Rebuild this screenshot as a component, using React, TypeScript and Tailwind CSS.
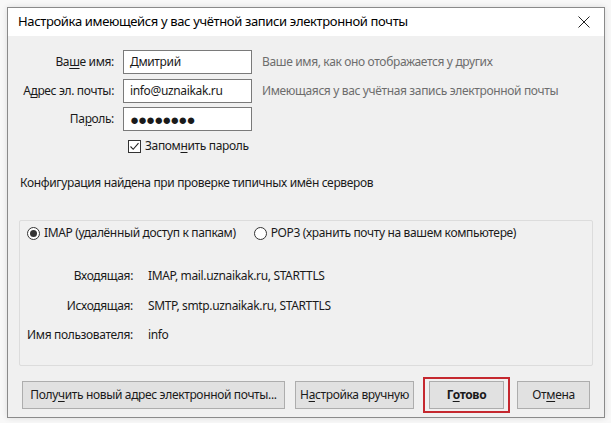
import React from "react";

const Key: React.FC<{ children: React.ReactNode }> = ({ children }) => (
  <span className="underline underline-offset-2 decoration-1">{children}</span>
);

const Field: React.FC<{ label: React.ReactNode; value: React.ReactNode; hint?: string }> = ({
  label,
  value,
  hint,
}) => (
  <div className="flex items-center h-[24px]">
    <div className="w-[107px] text-right pr-[1px]">{label}</div>
    <div className="ml-[8px] w-[129px] h-[24px] bg-white border border-[#7a7a7a] flex items-center px-[6px]">
      {value}
    </div>
    {hint && <div className="ml-[10px] text-[#6d6d6d]">{hint}</div>}
  </div>
);

const Radio: React.FC<{ checked?: boolean; label: string }> = ({ checked, label }) => (
  <div className="flex items-center gap-[4px]">
    <span className="w-[13px] h-[13px] rounded-full border border-[#333] bg-white flex items-center justify-center">
      {checked && <span className="w-[7px] h-[7px] rounded-full bg-[#333]" />}
    </span>
    <span>{label}</span>
  </div>
);

const InfoRow: React.FC<{ label: string; value: string }> = ({ label, value }) => (
  <div className="flex items-center">
    <div className="w-[106px] text-right">{label}</div>
    <div className="ml-[15px]">{value}</div>
  </div>
);

export default function App() {
  return (
    <div
      className="w-[611px] h-[423px] bg-[#f8f8f8] pt-[7px] pl-[7px] text-[12px] tracking-[-0.35px] text-[#1a1a1a]"
      style={{ fontFamily: '"Noto Sans", "Open Sans", sans-serif' }}
    >
      <div className="w-[598px] h-[411px] border border-[#8a8a8a] bg-[#f0f0f0] flex flex-col shadow-[0_0_6px_rgba(0,0,0,0.12)]">
        {/* title bar */}
        <div className="h-[28px] bg-white flex items-center justify-between pl-[10px] pr-[14px]">
          <span className="text-[13px] text-black">
            Настройка имеющейся у вас учётной записи электронной почты
          </span>
          <svg width="12" height="12" viewBox="0 0 12 12">
            <path d="M0.5 0.5 L11.5 11.5 M11.5 0.5 L0.5 11.5" stroke="#222" strokeWidth="1" />
          </svg>
        </div>

        {/* account fields */}
        <div className="flex flex-col gap-[4.5px] mt-[14px]">
          <Field
            label={<>Ва<Key>ш</Key>е имя:</>}
            value="Дмитрий"
            hint="Ваше имя, как оно отображается у других"
          />
          <Field
            label={<>А<Key>д</Key>рес эл. почты:</>}
            value="info@uznaikak.ru"
            hint="Имеющаяся у вас учётная запись электронной почты"
          />
          <Field
            label={<>Па<Key>р</Key>оль:</>}
            value={<span className="text-[15px] tracking-[-1px] leading-none">●●●●●●●●</span>}
          />
        </div>

        <div className="flex items-center ml-[120px] mt-[6px] gap-[4px]">
          <span className="w-[13px] h-[13px] border border-[#333] bg-white flex items-center justify-center">
            <svg width="11" height="11" viewBox="0 0 11 11">
              <path d="M1.5 5.5 L4.2 8.3 L9.5 2.2" stroke="#222" strokeWidth="1.1" fill="none" />
            </svg>
          </span>
          <span>
            Запом<Key>н</Key>ить пароль
          </span>
        </div>

        <div className="ml-[12px] mt-[19px]">Конфигурация найдена при проверке типичных имён серверов</div>

        {/* server group */}
        <div className="mx-[11px] mt-[28px] h-[146px] border border-[#dcdcdc] rounded-[2px] flex flex-col pl-[7px]">
          <div className="flex items-center gap-[18px] mt-[3px]">
            <Radio checked label="IMAP (удалённый доступ к папкам)" />
            <Radio label="POP3 (хранить почту на вашем компьютере)" />
          </div>
          <div className="flex flex-col gap-[11.5px] mt-[25px]">
            <InfoRow label="Входящая:" value="IMAP, mail.uznaikak.ru, STARTTLS" />
            <InfoRow label="Исходящая:" value="SMTP, smtp.uznaikak.ru, STARTTLS" />
            <InfoRow label="Имя пользователя:" value="info" />
          </div>
        </div>

        {/* buttons */}
        <div className="flex items-center mt-[11px] px-[14px]">
          <button className="h-[28px] w-[263px] bg-[#e1e1e1] border border-[#adadad]">
            Полу<Key>ч</Key>ить новый адрес электронной почты...
          </button>
          <div className="flex-1" />
          <button className="h-[28px] w-[119px] bg-[#e1e1e1] border border-[#adadad]">
            Н<Key>а</Key>стройка вручную
          </button>
          <div className="ml-[9px] py-[2px] px-[4px] border-2 border-[#c5282f]">
            <button className="h-[28px] w-[75px] bg-[#e1e1e1] border border-[#adadad] font-bold">
              Г<Key>о</Key>тово
            </button>
          </div>
          <button className="ml-[7px] h-[28px] w-[73px] bg-[#e1e1e1] border border-[#adadad]">
            От<Key>м</Key>ена
          </button>
        </div>
      </div>
    </div>
  );
}
